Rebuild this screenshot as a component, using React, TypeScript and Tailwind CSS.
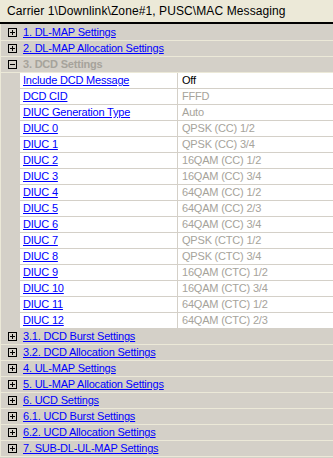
import { Fragment } from "react"

const before = ["1. DL-MAP Settings", "2. DL-MAP Allocation Settings"]
const after = [
  "3.1. DCD Burst Settings",
  "3.2. DCD Allocation Settings",
  "4. UL-MAP Settings",
  "5. UL-MAP Allocation Settings",
  "6. UCD Settings",
  "6.1. UCD Burst Settings",
  "6.2. UCD Allocation Settings",
  "7. SUB-DL-UL-MAP Settings",
]

const props: [string, string, boolean][] = [
  ["Include DCD Message", "Off", true],
  ["DCD CID", "FFFD", false],
  ["DIUC Generation Type", "Auto", false],
  ["DIUC 0", "QPSK (CC) 1/2", false],
  ["DIUC 1", "QPSK (CC) 3/4", false],
  ["DIUC 2", "16QAM (CC) 1/2", false],
  ["DIUC 3", "16QAM (CC) 3/4", false],
  ["DIUC 4", "64QAM (CC) 1/2", false],
  ["DIUC 5", "64QAM (CC) 2/3", false],
  ["DIUC 6", "64QAM (CC) 3/4", false],
  ["DIUC 7", "QPSK (CTC) 1/2", false],
  ["DIUC 8", "QPSK (CTC) 3/4", false],
  ["DIUC 9", "16QAM (CTC) 1/2", false],
  ["DIUC 10", "16QAM (CTC) 3/4", false],
  ["DIUC 11", "64QAM (CTC) 1/2", false],
  ["DIUC 12", "64QAM (CTC) 2/3", false],
]

function Box({ open }: { open?: boolean }) {
  return (
    <svg width="9" height="9" viewBox="0 0 9 9" className="shrink-0">
      <rect x="0.5" y="0.5" width="8" height="8" fill="none" stroke="#000" />
      <line x1="2" y1="4.5" x2="7" y2="4.5" stroke="#000" />
      {!open && <line x1="4.5" y1="2" x2="4.5" y2="7" stroke="#000" />}
    </svg>
  )
}

function Section({ label, open }: { label: string; open?: boolean }) {
  return (
    <div className="flex h-[16px] items-center border-b border-[#ece9d8] bg-[#d4d0c8] pl-[7px]">
      <Box open={open} />
      <span
        className={
          open
            ? "ml-[6px] font-bold text-[#a6a39b]"
            : "ml-[6px] text-[#0000ff] underline"
        }
      >
        {label}
      </span>
    </div>
  )
}

export default function App() {
  return (
    <div className="h-[458px] w-[333px] overflow-hidden bg-[#d4d0c8] text-[11px] leading-[15px] tracking-[-0.2px] font-['Liberation_Sans',Arial,sans-serif]">
      <div className="flex h-[24px] items-center border-b-2 border-black bg-[#ece9d8] pl-[7px] text-[12px] tracking-[0.1px] text-black">
        Carrier 1\Downlink\Zone#1, PUSC\MAC Messaging
      </div>
      <div className="border-l border-[#ece9d8] pt-[1px]">
        {before.map((s) => (
          <Section key={s} label={s} />
        ))}
        <Section label="3. DCD Settings" open />
        {props.map(([k, v, on]) => (
          <Fragment key={k}>
            <div className="flex h-[16px]">
              <div className="w-[19px] shrink-0 border-b border-[#d4d0c8]" />
              <div className="flex w-[158px] shrink-0 items-center border-b border-r border-[#d4d0c8] bg-white pl-[3px] text-[#0000ff] underline">
                {k}
              </div>
              <div
                className={
                  on
                    ? "flex flex-1 items-center border-b border-[#d4d0c8] bg-white pl-[4px] text-black"
                    : "flex flex-1 items-center border-b border-[#d4d0c8] bg-white pl-[4px] text-[#a6a39b]"
                }
              >
                {v}
              </div>
            </div>
          </Fragment>
        ))}
        {after.map((s) => (
          <Section key={s} label={s} />
        ))}
      </div>
    </div>
  )
}
